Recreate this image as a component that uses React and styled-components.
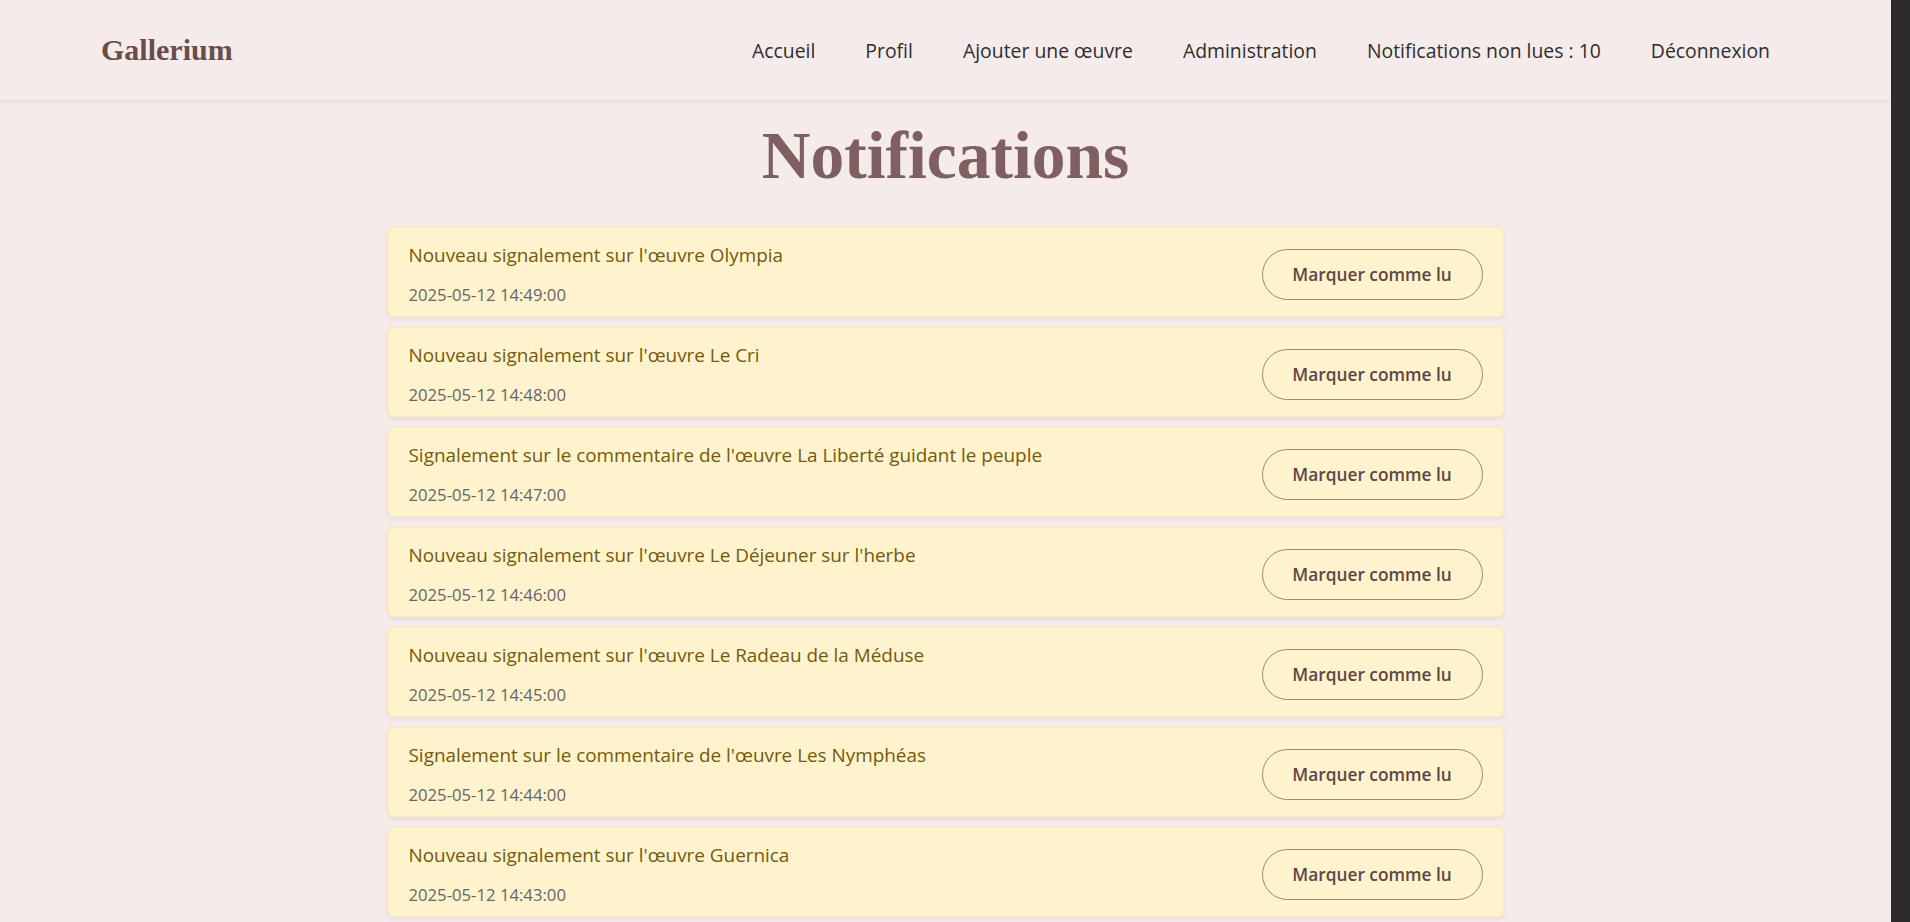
import React from "react";
import styled, { createGlobalStyle } from "styled-components";

const GlobalStyle = createGlobalStyle`
  html, body {
    margin: 0;
    padding: 0;
    background: #2b2b2b;
  }
  body {
    font-family: "Open Sans", "Noto Sans", sans-serif;
    color: #333;
  }
  * { box-sizing: border-box; }
`;

const links = [
  "Accueil",
  "Profil",
  "Ajouter une œuvre",
  "Administration",
  "Notifications non lues : 10",
  "Déconnexion",
];

const artworks = [
  ["Nouveau signalement sur l'œuvre", "Olympia"],
  ["Nouveau signalement sur l'œuvre", "Le Cri"],
  ["Signalement sur le commentaire de l'œuvre", "La Liberté guidant le peuple"],
  ["Nouveau signalement sur l'œuvre", "Le Déjeuner sur l'herbe"],
  ["Nouveau signalement sur l'œuvre", "Le Radeau de la Méduse"],
  ["Signalement sur le commentaire de l'œuvre", "Les Nymphéas"],
  ["Nouveau signalement sur l'œuvre", "Guernica"],
  ["Nouveau signalement sur l'œuvre", "La Joconde"],
  ["Signalement sur le commentaire de l'œuvre", "La Nuit étoilée"],
  ["Nouveau signalement sur l'œuvre", "La Jeune Fille à la perle"],
  ["Nouveau signalement sur l'œuvre", "Le Baiser"],
  ["Signalement sur le commentaire de l'œuvre", "La Persistance de la mémoire"],
  ["Nouveau signalement sur l'œuvre", "Les Ménines"],
  ["Nouveau signalement sur l'œuvre", "La Naissance de Vénus"],
  ["Signalement sur le commentaire de l'œuvre", "Le Fils de l'homme"],
  ["Nouveau signalement sur l'œuvre", "American Gothic"],
  ["Nouveau signalement sur l'œuvre", "La Grande Vague de Kanagawa"],
  ["Signalement sur le commentaire de l'œuvre", "Les Tournesols"],
  ["Nouveau signalement sur l'œuvre", "Le Penseur"],
  ["Nouveau signalement sur l'œuvre", "La Ronde de nuit"],
  ["Nouveau signalement sur l'œuvre", "Impression, soleil levant"],
  ["Signalement sur le commentaire de l'œuvre", "Le Jardin des délices"],
];

const notifications = artworks.map(([msg, title], i) => ({
  id: i,
  message: `${msg} ${title}`,
  date: `2025-05-12 14:${String(49 - i).padStart(2, "0")}:00`,
}));

export default function App() {
  return (
    <Page>
      <GlobalStyle />
      <Header>
        <Logo>Gallerium</Logo>
        <Nav>
          {links.map((l) => (
            <NavLink key={l} href="#">
              {l}
            </NavLink>
          ))}
        </Nav>
      </Header>
      <Main>
        <Title>Notifications</Title>
        <List>
          {notifications.map((n) => (
            <Card key={n.id}>
              <Info>
                <Message>{n.message}</Message>
                <Date>{n.date}</Date>
              </Info>
              <ReadButton>Marquer comme lu</ReadButton>
            </Card>
          ))}
        </List>
      </Main>
    </Page>
  );
}

// leaves room on the right like the browser scrollbar in the capture
const Page = styled.div`
  margin-right: 19px;
  min-height: 100vh;
  background: #f5ebeb;
`;

const Header = styled.header`
  height: 100px;
  display: flex;
  align-items: center;
  justify-content: space-between;
  padding: 0 121px 0 101px;
  background: #f5ebeb;
  box-shadow: 0 2px 4px rgba(0, 0, 0, 0.07);
`;

const Logo = styled.div`
  font-family: "Liberation Serif", "Times New Roman", serif;
  font-weight: 700;
  font-size: 30px;
  color: #6b4c4c;
  margin-top: -1px;
`;

const Nav = styled.nav`
  display: flex;
  align-items: center;
  gap: 50px;
`;

const NavLink = styled.a`
  font-size: 19.4px;
  font-weight: 500;
  color: #2e2e2e;
  text-decoration: none;
`;

const Main = styled.main`
  display: flex;
  flex-direction: column;
  align-items: center;
  padding-bottom: 40px;
`;

const Title = styled.h1`
  font-family: "Liberation Serif", "Times New Roman", serif;
  font-weight: 700;
  font-size: 67.5px;
  line-height: 1;
  color: #7f5f5f;
  margin: 22px 0 37px;
`;

const List = styled.div`
  width: 1116px;
  display: flex;
  flex-direction: column;
  gap: 10px;
`;

const Card = styled.div`
  display: flex;
  align-items: center;
  justify-content: space-between;
  height: 90px;
  padding: 15px 20px 10px;
  background: #fff3cd;
  border: 1px solid #ffecb0;
  border-radius: 6px;
  box-shadow: 0 2px 5px rgba(0, 0, 0, 0.08);
`;

const Info = styled.div`
  display: flex;
  flex-direction: column;
  gap: 13px;
`;

const Message = styled.div`
  font-size: 18.9px;
  line-height: 27px;
  color: #735a0c;
`;

const Date = styled.div`
  font-size: 16.7px;
  line-height: 25px;
  color: #666;
`;

const ReadButton = styled.button`
  width: 221px;
  height: 51px;
  margin-top: 1px;
  border: 1px solid #9b8676;
  border-radius: 26px;
  background: transparent;
  font-family: "Open Sans", "Noto Sans", sans-serif;
  font-size: 17.3px;
  font-weight: 600;
  color: #5e4646;
  cursor: pointer;
`;
